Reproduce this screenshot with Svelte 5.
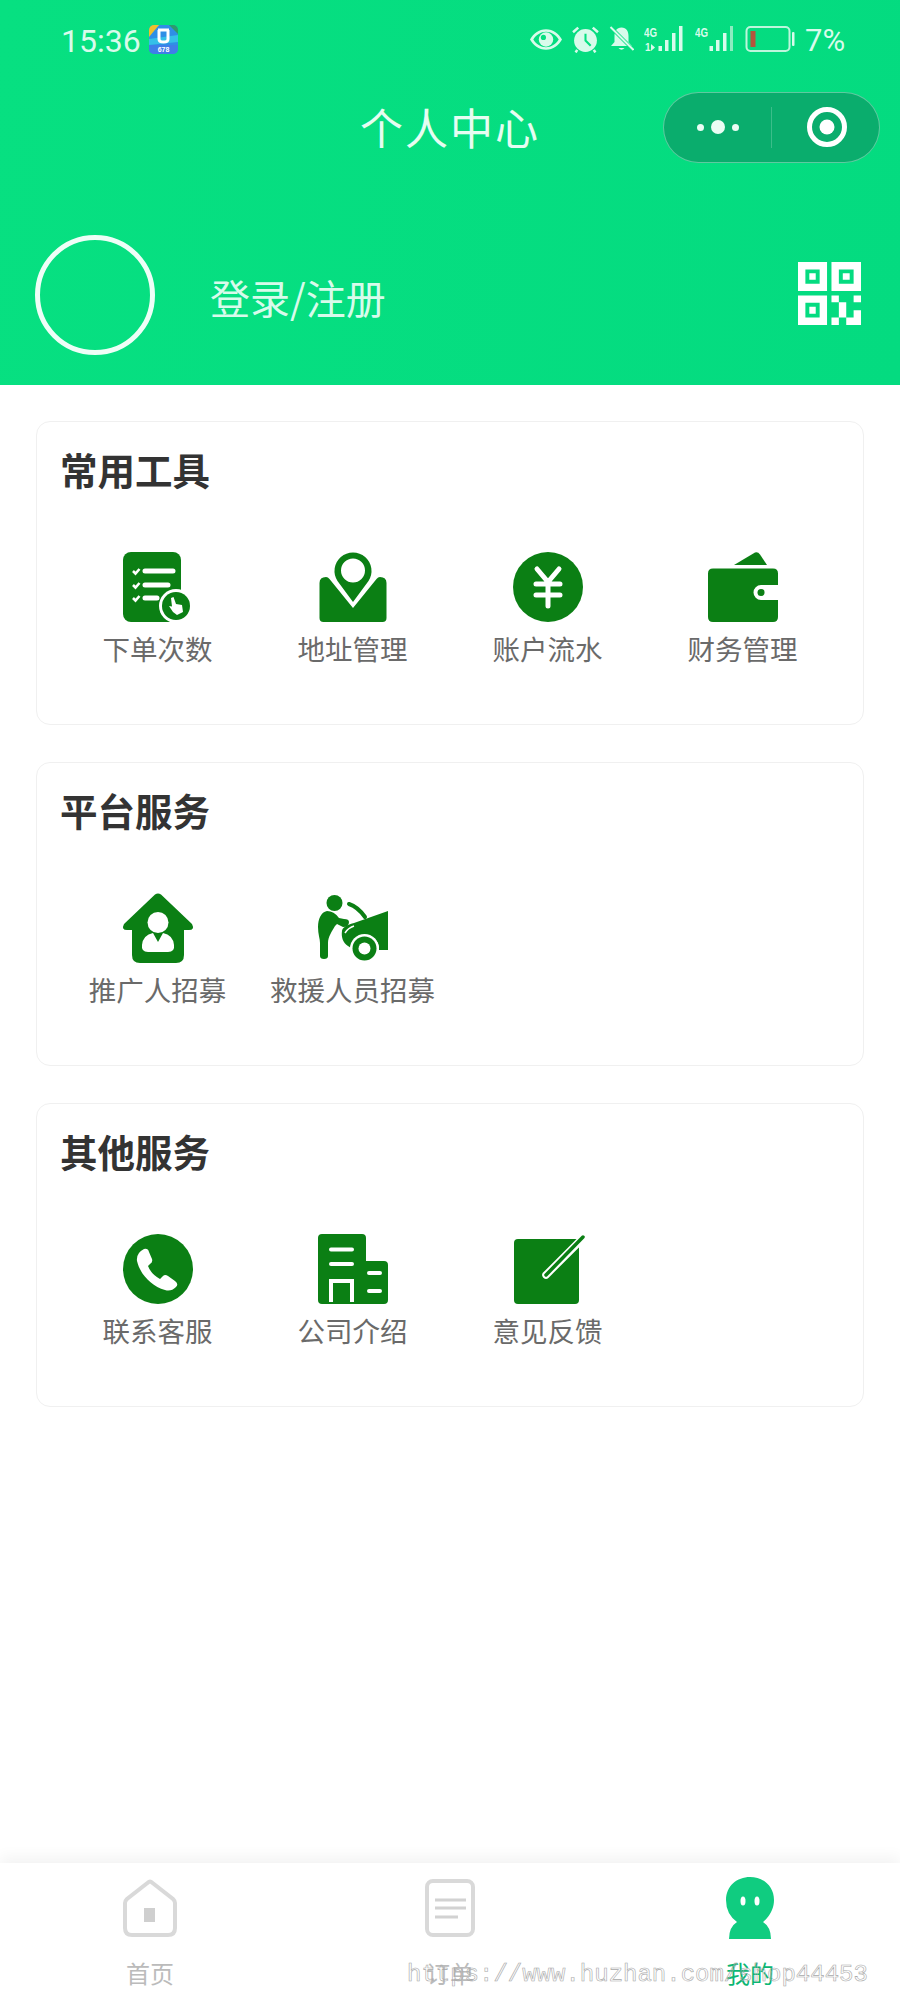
<script>
  const sections = [
    { title: '常用工具', items: ['下单次数', '地址管理', '账户流水', '财务管理'], icons: ['orders', 'address', 'yen', 'wallet'] },
    { title: '平台服务', items: ['推广人招募', '救援人员招募'], icons: ['house', 'rescue'] },
    { title: '其他服务', items: ['联系客服', '公司介绍', '意见反馈'], icons: ['phone', 'company', 'note'] }
  ];
</script>

<div class="page">
  <header class="header">
    <div class="status">
      <span class="time">15:36</span>
      <svg class="app" width="29" height="29" viewBox="0 0 29 29">
        <defs><clipPath id="appc"><rect width="29" height="29" rx="5" /></clipPath></defs>
        <g clip-path="url(#appc)">
          <rect width="29" height="29" fill="#2f8fe6" />
          <path d="M0 0H10L0 12Z" fill="#f0c02c" />
          <path d="M20 0H29V9Z" fill="#2e9a6a" />
          <path d="M0 14L29 10V17L0 20Z" fill="#35c0e8" />
          <rect y="20" width="29" height="9" fill="#3f7fe8" />
          <path d="M9 5H20M10 5V14Q10 17 14.500 17Q19 17 19 14V5" fill="none" stroke="#fff" stroke-width="3" />
          <text x="14.500" y="27" class="apptext">678</text>
        </g>
      </svg>
      <div class="status-right">
        <svg width="32" height="21" viewBox="0 0 31 20">
          <path fill-rule="evenodd" d="M15.500 0C22.500 0 28 4.500 31 10C28 15.500 22.500 20 15.500 20C8.500 20 3 15.500 0 10C3 4.500 8.500 0 15.500 0ZM15.500 2.500C10.500 2.500 6 5.500 3.200 10C6 14.500 10.500 17.500 15.500 17.500C20.500 17.500 25 14.500 27.800 10C25 5.500 20.500 2.500 15.500 2.500Z" fill="#d8fbeb" />
          <circle cx="15.500" cy="10" r="7" fill="#d8fbeb" />
          <circle cx="13" cy="8" r="2.500" fill="#06df80" />
        </svg>
        <svg width="27" height="27" viewBox="0 0 26 26">
          <circle cx="13" cy="14" r="11" fill="#d8fbeb" />
          <path d="M13 7.500V14L18 19" fill="none" stroke="#06df80" stroke-width="2" />
          <path d="M1 6L6 1.500M25 6L20 1.500M5 23L3.500 25.500M21 23L22.500 25.500" stroke="#d8fbeb" stroke-width="2.400" fill="none" />
        </svg>
        <svg width="25" height="26" viewBox="0 0 24 26">
          <path d="M12 1.500C7 1.500 5 5.500 5 10V16L1.500 20H22.500L19 16V10C19 5.500 17 1.500 12 1.500Z" fill="#d8fbeb" />
          <path d="M9 22Q12 25.500 15 22Z" fill="#d8fbeb" />
          <path d="M1 1L24 24" stroke="#06df80" stroke-width="3.500" />
          <path d="M1 1L24 24" stroke="#d8fbeb" stroke-width="2" />
        </svg>
        <svg width="41" height="26" viewBox="0 0 41 26">
          <text x="0" y="11" class="sigtext" textLength="13" lengthAdjust="spacingAndGlyphs">4G</text>
          <text x="1" y="25" class="sigtext small">1</text>
          <path d="M7 18L11 21.500L7 25Z" fill="#d8fbeb" />
          <rect x="14.500" y="20" width="3.500" height="5" fill="#d8fbeb" />
          <rect x="21" y="14" width="3.500" height="11" fill="#d8fbeb" />
          <rect x="28" y="7" width="3.500" height="18" fill="#d8fbeb" />
          <rect x="35" y="0" width="3.500" height="25" fill="#d8fbeb" />
        </svg>
        <svg width="40" height="26" viewBox="0 0 40 26">
          <text x="0" y="11" class="sigtext" textLength="13" lengthAdjust="spacingAndGlyphs">4G</text>
          <rect x="14.500" y="20" width="3.500" height="5" fill="#d8fbeb" />
          <rect x="21" y="14" width="3.500" height="11" fill="#d8fbeb" />
          <rect x="28" y="7" width="3.500" height="18" fill="#d8fbeb" />
          <rect x="35" y="0" width="3" height="25" fill="#8cecc0" />
        </svg>
        <svg width="50" height="26" viewBox="0 0 49 26">
          <rect x="1" y="1" width="43" height="24" rx="4" fill="none" stroke="#bdf6dc" stroke-width="2" />
          <rect x="46.500" y="6" width="2.500" height="14" rx="1" fill="#d8fbeb" />
          <rect x="5" y="5" width="5" height="16" fill="#b5553c" />
        </svg>
        <span class="pct">7%</span>
      </div>
    </div>

    <div class="nav">
      <span></span>
      <h1>个人中心</h1>
      <div class="capsule">
        <div class="cap-part">
          <i class="dot"></i><i class="dot big"></i><i class="dot"></i>
        </div>
        <div class="cap-part divided">
          <svg class="target" width="40" height="40" viewBox="0 0 40 40">
            <circle cx="20" cy="20" r="17.500" fill="none" stroke="#fff" stroke-width="5" />
            <circle cx="20" cy="20" r="7.500" fill="#fff" />
          </svg>
        </div>
      </div>
    </div>

    <div class="profile">
      <div class="avatar"></div>
      <span class="login">登录/注册</span>
      <svg class="qr" width="63" height="63" viewBox="0 0 64 64">
        <path fill="#fff" fill-rule="evenodd" d="M0 0H29.500V29.500H0ZM7.500 7.500V22H22V7.500ZM11.500 11.500H18V18H11.500ZM34 0H64V29.500H34ZM41.500 7.500V22H56.500V7.500ZM45.500 11.500H52.500V18H45.500ZM0 34H29.500V64H0ZM7.500 41.500V56.500H22V41.500ZM11.500 45.500H18V52.500H11.500Z" />
        <path fill="#fff" d="M34 34H41.500V41H34ZM56.500 34H64V41H56.500ZM41.500 41H49V56.500H41.500ZM34 56.500H41.500V64H34ZM49 56.500H64V64H49ZM56.500 49H64V56.500H56.500Z" />
      </svg>
    </div>
  </header>

  <main class="main">
    {#each sections as section}
      <section class="card">
        <h2>{section.title}</h2>
        <div class="grid">
          {#each section.items as label, i}
            <div class="item">
              <svg width="70" height="70" viewBox="0 0 70 70" class="icon">
                {#if section.icons[i] === 'orders'}
                  <rect width="58" height="70" rx="8" fill="#0b7f14" />
                  <path d="M22 19H50M22 33H45M22 46H34" stroke="#fff" stroke-width="5" stroke-linecap="round" fill="none" />
                  <path d="M10 19L12.500 21.500L16.500 17M10 33L12.500 35.500L16.500 31M10 46L12.500 48.500L16.500 44" stroke="#fff" stroke-width="2.600" fill="none" />
                  <circle cx="53" cy="54" r="17" fill="#fff" />
                  <circle cx="53" cy="54" r="14" fill="#0b7f14" />
                  <path d="M48 46L50.500 45L53 52L59 53L60 60L54 63L50 60L46 54L49 54.500Z" fill="#fff" />
                {:else if section.icons[i] === 'address'}
                  <path d="M1.500 31Q1.500 25 8 25Q10 25 11.500 27L35 56L58.500 27Q60 25 62 25Q68.500 25 68.500 31V66Q68.500 70 64.500 70H5.500Q1.500 70 1.500 66Z" fill="#0b7f14" />
                  <path fill="#0b7f14" fill-rule="evenodd" d="M35 50L19.500 29A18.500 18.500 0 1 1 50.500 29ZM35 6.500A12 12 0 1 0 35 30.500A12 12 0 1 0 35 6.500Z" />
                {:else if section.icons[i] === 'yen'}
                  <circle cx="35" cy="35" r="35" fill="#0b7f14" />
                  <path d="M24 17L35 30L46 17M23 32H47M23 43H47M35 30V54" stroke="#fff" stroke-width="5" stroke-linecap="round" stroke-linejoin="round" fill="none" />
                {:else if section.icons[i] === 'wallet'}
                  <path d="M26 13L47 0.500Q50 -0.500 52 2.500L59 13Z" fill="#0b7f14" />
                  <path d="M5 16.500H65Q70 16.500 70 21.500V33H53A7.500 7.500 0 0 0 53 48H70V65Q70 70 65 70H5Q0 70 0 65V21.500Q0 16.500 5 16.500Z" fill="#0b7f14" />
                  <circle cx="53" cy="40.500" r="3.500" fill="#0b7f14" />
                {:else if section.icons[i] === 'house'}
                  <path d="M32 1.500Q35 -0.500 38 1.500L69 31Q72 37 66 37H61V62Q61 70 53 70H17Q9 70 9 62V37H4Q-2 37 1 31Z" fill="#0b7f14" />
                  <circle cx="35" cy="29.500" r="10.500" fill="#fff" />
                  <path d="M30 40L35 49L40 40Q50 42 51 52Q52 59 45 59H25Q18 59 19 52Q20 42 30 40Z" fill="#fff" />
                {:else if section.icons[i] === 'rescue'}
                  <circle cx="16.500" cy="10" r="8" fill="#0b7f14" />
                  <path d="M9 18C3 19 0 26 0 34C0 41 2 46 2 50V63Q2 66 6 66Q10 66 10 63V50C10 44 14 38 17 33L19 31L25 34Q31 34 31 29Q31 26 26 26L21 25Q16 18 9 18Z" fill="#0b7f14" />
                  <path d="M31 11Q40 14 47 24" stroke="#0b7f14" stroke-width="4" stroke-linecap="round" fill="none" />
                  <path d="M70 18V57H61A14 14 0 0 0 33 55L30 53C25 50 23 44 24 38C24 35 28 32 36 30Z" fill="#0b7f14" />
                  <path d="M27 40Q30 35 36 33" stroke="#fff" stroke-width="1.500" fill="none" />
                  <circle cx="46.500" cy="55.500" r="14.500" fill="#fff" />
                  <circle cx="46.500" cy="55.500" r="12" fill="#0b7f14" />
                  <circle cx="46.500" cy="55.500" r="6" fill="#fff" />
                {:else if section.icons[i] === 'phone'}
                  <circle cx="35" cy="35" r="35" fill="#0b7f14" />
                  <path d="M21 15Q25 14 26 18L29 25Q30 28 27 30L25 32Q28 40 37 45L40 42Q42 40 45 42L52 47Q56 50 53 53Q48 58 42 56C28 52 17 40 14 27Q13 19 21 15Z" fill="#fff" />
                {:else if section.icons[i] === 'company'}
                  <path d="M4 0H44Q48 0 48 4V27H66Q70 27 70 31V66Q70 70 66 70H4Q0 70 0 66V4Q0 0 4 0Z" fill="#0b7f14" />
                  <path d="M13 15.500H34M13 30H34M51 39H62M51 57H62" stroke="#fff" stroke-width="4" stroke-linecap="round" fill="none" />
                  <path d="M13 68V47H34V68" stroke="#fff" stroke-width="4" fill="none" />
                {:else if section.icons[i] === 'note'}
                  <rect x="1" y="5" width="65" height="65" rx="4" fill="#0b7f14" />
                  <path d="M33 41L68 6" stroke="#fff" stroke-width="7.500" stroke-linecap="round" fill="none" />
                  <path d="M33 41L70 3" stroke="#0b7f14" stroke-width="3.500" stroke-linecap="round" fill="none" />
                {/if}
              </svg>
              <span class="label">{label}</span>
            </div>
          {/each}
        </div>
      </section>
    {/each}
  </main>

  <nav class="tabs">
    <div class="tab">
      <div class="tab-icon">
        <svg width="54" height="58" viewBox="0 0 54 58">
          <path d="M25 3.500Q27 1.500 29 3.500L50 20Q52 22 52 24V49Q52 56 45 56H9Q2 56 2 49V24Q2 22 4 20Z" fill="none" stroke="#d9d9d9" stroke-width="4" />
          <rect x="21" y="29" width="11" height="14" fill="#cfcfcf" />
        </svg>
      </div>
      <span>首页</span>
    </div>
    <div class="tab">
      <div class="tab-icon">
        <svg width="50" height="58" viewBox="0 0 50 58">
          <rect x="2" y="2" width="46" height="54" rx="6" fill="none" stroke="#d9d9d9" stroke-width="4" />
          <path d="M10 21H41M10 29H41M10 38H33" stroke="#d2d2d2" stroke-width="3" fill="none" />
        </svg>
      </div>
      <span>订单</span>
    </div>
    <div class="tab active">
      <div class="tab-icon">
        <svg width="48" height="62" viewBox="0 0 48 62">
          <path d="M3 62Q3 50 11 45Q0 37 0 23C0 9 11 0 24 0C37 0 48 9 48 23C48 37 37 45 37 45Q45 50 45 62Z" fill="#10cc80" />
          <ellipse cx="17" cy="24" rx="2.500" ry="4.500" fill="#fff" />
          <ellipse cx="31" cy="24" rx="2.500" ry="4.500" fill="#fff" />
        </svg>
      </div>
      <span>我的</span>
    </div>
    <div class="watermark">https://www.huzhan.com/shop44453</div>
  </nav>
</div>

<style>
  :global(body) {
    margin: 0;
    background: #fff;
  }
  .page {
    width: 900px;
    height: 2000px;
    display: flex;
    flex-direction: column;
    font-family: "Noto Sans CJK SC", "Noto Sans", sans-serif;
    overflow: hidden;
  }
  .header {
    height: 385px;
    background: linear-gradient(100deg, #07e081, #04db80);
    display: flex;
    flex-direction: column;
    color: #fff;
  }
  .status {
    height: 78px;
    padding: 0 56px 0 61px;
    display: flex;
    align-items: center;
    color: #d8fbeb;
  }
  .time {
    font-family: Roboto, sans-serif;
    font-size: 32px;
    line-height: 40px;
    width: 80px;
    margin-top: 3px;
  }
  .app {
    margin-left: 8px;
  }
  .apptext {
    font: 700 7px "Liberation Sans", sans-serif;
    fill: #fff;
    text-anchor: middle;
  }
  .status-right {
    margin-left: auto;
    display: flex;
    align-items: center;
    gap: 10px;
  }
  .sigtext {
    font: 700 13px "Liberation Sans", sans-serif;
    fill: #d8fbeb;
  }
  .sigtext.small {
    font-size: 10px;
  }
  .pct {
    font-family: Roboto, sans-serif;
    font-size: 31px;
    line-height: 40px;
    width: 39px;
    margin-top: 3px;
    white-space: nowrap;
  }
  .nav {
    height: 98px;
    padding: 0 20px;
    display: grid;
    grid-template-columns: 1fr auto 1fr;
    align-items: center;
  }
  h1 {
    margin: -2px 0 0;
    font-size: 43px;
    font-weight: 400;
    line-height: 60px;
    letter-spacing: 2px;
    color: #e6fdf2;
  }
  .capsule {
    justify-self: end;
    box-sizing: border-box;
    width: 217px;
    height: 71px;
    border-radius: 36px;
    background: #0aad6d;
    border: 1px solid rgba(255, 255, 255, 0.35);
    display: flex;
    align-items: center;
  }
  .cap-part {
    flex: 1;
    display: flex;
    align-items: center;
    justify-content: center;
    gap: 7px;
  }
  .divided {
    height: 41px;
    border-left: 1px solid rgba(255, 255, 255, 0.2);
  }
  .target {
    margin-left: 3px;
  }
  .dot {
    width: 7px;
    height: 7px;
    border-radius: 50%;
    background: #eafdf4;
  }
  .dot.big {
    width: 14px;
    height: 14px;
  }
  .profile {
    padding: 59px 39px 30px 35px;
    display: flex;
    align-items: center;
  }
  .avatar {
    box-sizing: border-box;
    width: 120px;
    height: 120px;
    border: 5px solid #eefef7;
    border-radius: 50%;
  }
  .login {
    margin: 4px 0 0 55px;
    font-size: 40px;
    line-height: 54px;
    color: #d8fbeb;
  }
  .qr {
    margin: -3px 0 0 auto;
  }
  .main {
    padding: 36px 36px 0;
    display: flex;
    flex-direction: column;
    gap: 37px;
  }
  .card {
    box-sizing: border-box;
    height: 304px;
    border: 1px solid #f0f0f0;
    border-radius: 14px;
    padding: 22px 23px 0;
  }
  h2 {
    margin: 0 0 58px;
    font-size: 37.500px;
    font-weight: 700;
    line-height: 50px;
    color: #333;
  }
  .grid {
    display: grid;
    grid-template-columns: repeat(4, 195px);
  }
  .item {
    display: flex;
    flex-direction: column;
    align-items: center;
    gap: 8px;
  }
  .icon {
    display: block;
    overflow: visible;
  }
  .label {
    font-size: 27.500px;
    line-height: 36px;
    color: #6a6a6a;
    white-space: nowrap;
  }
  .tabs {
    position: relative;
    margin-top: auto;
    height: 137px;
    display: grid;
    grid-template-columns: repeat(3, 300px);
    background: #fff;
    box-shadow: 0 -6px 14px rgba(0, 0, 0, 0.05);
  }
  .tab {
    display: flex;
    flex-direction: column;
    align-items: center;
    font-size: 24px;
    line-height: 34px;
    color: #bbb;
  }
  .tab-icon {
    height: 64px;
    margin: 13px 0 16px;
    display: flex;
    align-items: center;
    justify-content: center;
  }
  .tab.active {
    color: #0cb673;
  }
  .watermark {
    position: absolute;
    left: 407px;
    top: 95px;
    font-family: "Liberation Mono", monospace;
    font-size: 24px;
    line-height: 34px;
    color: transparent;
    -webkit-text-stroke: 0.6px #a8a8a8;
    white-space: nowrap;
  }
</style>
